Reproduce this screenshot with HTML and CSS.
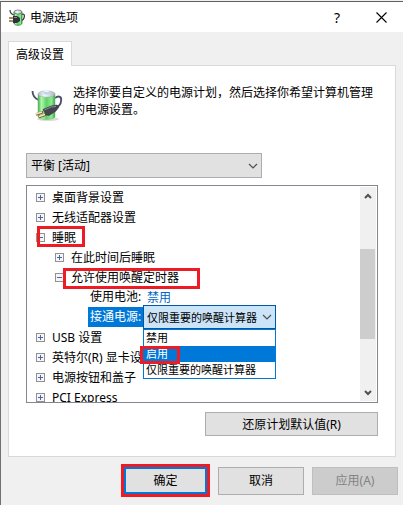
FILE: index.html
```html
<!DOCTYPE html>
<html lang="zh-CN">
<head>
<meta charset="utf-8">
<meta name="viewport" content="width=device-width, initial-scale=1.0">
<title>电源选项</title>
<link rel="stylesheet" href="styles.css">
</head>
<body>

<!-- shared icons -->
<svg width="0" height="0" class="defs" aria-hidden="true">
	<defs>
		<linearGradient id="green" x1="0" x2="1" y1="0" y2="0">
			<stop offset="0" stop-color="#3fae4a"/>
			<stop offset="0.2" stop-color="#b4f5ae"/>
			<stop offset="0.5" stop-color="#5ed365"/>
			<stop offset="0.8" stop-color="#8deb90"/>
			<stop offset="1" stop-color="#3aa548"/>
		</linearGradient>
		<linearGradient id="metal" x1="0" x2="1" y1="0" y2="0">
			<stop offset="0" stop-color="#b5bec4"/>
			<stop offset="0.4" stop-color="#f4f8fa"/>
			<stop offset="1" stop-color="#a9b4b9"/>
		</linearGradient>
	</defs>
	<symbol id="battery" viewBox="0 0 32 33">
		<ellipse cx="17" cy="30" rx="11" ry="2" fill="#dcdcdc"/>
		<path d="M1.500 2c0 4 2 7 6 9" fill="none" stroke="#4a4d6c" stroke-width="1.800"/>
		<path d="M24 9c4-3 7-1 6 3 0 4-3 6-7 7" fill="none" stroke="#4a4d6c" stroke-width="1.800"/>
		<path d="M7 5v22.500c0 4 17 4 17 0V5z" fill="url(#green)" stroke="#6fb877" stroke-width="0.500"/>
		<ellipse cx="15.500" cy="5" rx="8.500" ry="3.200" fill="url(#metal)" stroke="#9ba7ab" stroke-width="0.500"/>
		<path d="M12.500 2v2.500c0 1.200 6 1.200 6 0V2z" fill="#b9d4ea"/>
		<ellipse cx="15.500" cy="2" rx="3" ry="1.300" fill="#e8f4fc"/>
		<path d="M15 25.500l-7 2.500M12 23l-7 2.500" stroke="#7a5c34" stroke-width="2.400"/>
		<path d="M14 25.500l-6 2M11 23l-6 2" stroke="#f8e6bf" stroke-width="1.400"/>
		<path d="M12 20.500l8-3.500 6-1 2 2-3 4-7 4.500-3-0.500z" fill="#43454f" stroke="#2b2d36" stroke-width="0.500"/>
		<path d="M13.500 21l6.500-3 5-0.500" fill="none" stroke="#8b8e9c" stroke-width="1"/>
	</symbol>
	<symbol id="battery-small" viewBox="0 0 16 17">
		<path d="M1 1c0 3 1 4 4 5" fill="none" stroke="#3c4043" stroke-width="1.200"/>
		<path d="M12 6c3-2 4 0 3 3s-3 3-5 3" fill="none" stroke="#3c4043" stroke-width="1.300"/>
		<path d="M5 3v11c0 3 8 3 8 0V3z" fill="url(#green)" stroke="#2c7a38" stroke-width="0.800"/>
		<ellipse cx="9" cy="3" rx="4" ry="2" fill="url(#metal)" stroke="#59645e" stroke-width="0.700"/>
		<path d="M0 9h5M0 12h5" stroke="#8b6a2c" stroke-width="1.400"/>
		<path d="M4 7h4l3 2v3l-3 2H4z" fill="#2f3136"/>
		<path d="M5 8.500h3" stroke="#878a92" stroke-width="1"/>
	</symbol>
	<symbol id="chevron" viewBox="0 0 10 6">
		<path d="M1 1l4 4 4-4" fill="none" stroke="#505050" stroke-width="1.200"/>
	</symbol>
	<symbol id="arrow" viewBox="0 0 8 6">
		<path d="M1 1l3 3 3-3" fill="none" stroke="#505050" stroke-width="2"/>
	</symbol>
</svg>

<div class="window">
	<header class="titlebar">
		<svg class="title_icon"><use href="#battery-small"/></svg>
		<h1>电源选项</h1>
		<button class="title_button" aria-label="帮助">?</button>
		<button class="title_button" aria-label="关闭">
			<svg width="11" height="11" viewBox="0 0 11 11"><path d="M0.500 0.500l10 10M10.500 0.500l-10 10" stroke="#000" stroke-width="1.100"/></svg>
		</button>
	</header>

	<main class="content">
		<button class="tab" role="tab" aria-selected="true">高级设置</button>
		<section class="panel">
			<div class="intro">
				<svg class="intro_icon"><use href="#battery"/></svg>
				<p>选择你要自定义的电源计划，然后选择你希望计算机管理的电源设置。</p>
			</div>

			<div class="combo plan">
				<select aria-label="电源计划"><option>平衡 [活动]</option></select>
				<svg class="chevron"><use href="#chevron"/></svg>
			</div>

			<div class="list">
				<ul class="tree">
					<li><button class="toggle" aria-label="展开"></button><span>桌面背景设置</span></li>
					<li><button class="toggle" aria-label="展开"></button><span>无线适配器设置</span></li>
					<li class="marked mark_sleep"><button class="toggle open" aria-label="折叠"></button><span>睡眠</span></li>
					<li class="level2"><button class="toggle" aria-label="展开"></button><span>在此时间后睡眠</span></li>
					<li class="level2 marked mark_timer"><button class="toggle open" aria-label="折叠"></button><span>允许使用唤醒定时器</span></li>
					<li class="level3"><span class="name">使用电池:</span><a href="#">禁用</a></li>
					<li class="level3">
						<label class="name selected" for="plugged">接通电源:</label>
						<div class="combo timer">
							<select id="plugged"><option>仅限重要的唤醒计算器</option></select>
							<svg class="chevron"><use href="#chevron"/></svg>
							<ul class="dropdown" role="listbox" aria-label="接通电源">
								<li role="option">禁用</li>
								<li role="option" class="active" aria-selected="true">启用</li>
								<li role="option">仅限重要的唤醒计算器</li>
							</ul>
						</div>
					</li>
					<li><button class="toggle" aria-label="展开"></button><span>USB 设置</span></li>
					<li><button class="toggle" aria-label="展开"></button><span>英特尔(R) 显卡设置</span></li>
					<li><button class="toggle" aria-label="展开"></button><span>电源按钮和盖子</span></li>
					<li><button class="toggle" aria-label="展开"></button><span>PCI Express</span></li>
				</ul>
				<div class="scrollbar">
					<button aria-label="向上滚动"><svg class="arrow up"><use href="#arrow"/></svg></button>
					<div class="track"><div class="thumb"></div></div>
					<button aria-label="向下滚动"><svg class="arrow"><use href="#arrow"/></svg></button>
				</div>
			</div>

			<button class="button restore">还原计划默认值(R)</button>
		</section>
	</main>

	<footer class="actions">
		<span class="mark_ok"><button class="button default">确定</button></span>
		<button class="button">取消</button>
		<button class="button" disabled>应用(A)</button>
	</footer>
</div>

</body>
</html>
```

FILE: styles.css
```css
*, *::after {
	box-sizing: border-box;
}
body {
	margin: 0;
	background-color: #f0f0f0;
	color: #000;
	font-size: 12px;
	line-height: 17px;
	font-family: "Noto Sans", "Noto Sans CJK SC", sans-serif;
}
button, select {
	margin: 0;
	padding: 0;
	border: 0;
	border-radius: 0;
	background: none;
	color: inherit;
	font: inherit;
}
ul {
	margin: 0;
	padding: 0;
	list-style: none;
}
.defs {
	position: absolute;
}

.window {
	min-height: 100vh;
	padding-top: 1px;
}
.window > * {
	border-left: 1px solid #707070;
}

/* title bar */
.titlebar {
	display: flex;
	align-items: center;
	height: 31px;
	padding-left: 8px;
	border-top: 1px solid #606060;
	background-color: #fff;
}
.title_icon {
	width: 16px;
	height: 17px;
}
h1 {
	flex: 1;
	margin: 0 0 0 5px;
	font-size: 12px;
	font-weight: normal;
}
.title_button {
	display: flex;
	align-items: center;
	justify-content: center;
	width: 44px;
	height: 30px;
	font-size: 14px;
}

/* tab and its panel */
.content {
	padding: 9px 7px 0;
}
.tab {
	position: relative;
	display: block;
	width: 64px;
	height: 25px;
	margin-bottom: -1px;
	border: 1px solid #d9d9d9;
	border-bottom: 0;
	background-color: #fff;
}
.panel {
	display: flex;
	flex-direction: column;
	padding: 18px 17px 20px;
	border: 1px solid #d9d9d9;
	background-color: #fff;
}
.intro {
	display: flex;
	gap: 10px;
	min-height: 69px;
	padding-left: 5px;
}
.intro_icon {
	flex: none;
	width: 32px;
	height: 33px;
	margin-top: 5px;
}
.intro p {
	margin: 0;
}

/* drop-downs */
.combo {
	position: relative;
}
.combo select {
	display: block;
	width: 100%;
	height: 100%;
	appearance: none;
}
.chevron {
	position: absolute;
	top: 50%;
	right: 4px;
	width: 10px;
	height: 6px;
	margin-top: -3px;
	pointer-events: none;
}
.plan {
	width: 67%;
	height: 25px;
	margin-bottom: 7px;
}
.plan select {
	padding-left: 4px;
	border: 1px solid #adadad;
	background-color: #e1e1e1;
}
.timer {
	width: 133px;
	height: 24px;
	font-size: 11px;
}
.timer select {
	padding-left: 3px;
	border: 1px solid #0058a4;
	background-color: #cce4f7;
}
.dropdown {
	position: absolute;
	top: 100%;
	left: 0;
	width: 100%;
	border: 1px solid #0078d7;
	background-color: #fff;
	line-height: 16px;
}
.dropdown li {
	position: relative;
	height: 16px;
	padding-left: 2px;
}
.dropdown .active {
	background-color: #0078d7;
	color: #fff;
}

/* settings tree */
.list {
	display: flex;
	height: 218px;
	padding: 1px;
	margin-bottom: 9px;
	border: 1px solid #828790;
	overflow: hidden;
}
.tree {
	flex: 1;
	padding-left: 8px;
}
.tree > li {
	position: relative;
	display: flex;
	align-items: center;
	gap: 7px;
	height: 20px;
	white-space: nowrap;
}
.tree > .level2 {
	padding-left: 19px;
}
.tree > .level3 {
	gap: 0;
	padding-left: 52px;
	z-index: 1;
}
.toggle {
	width: 9px;
	height: 9px;
	border: 1px solid #919191;
	background: linear-gradient(#4b63a7, #4b63a7) center / 5px 1px no-repeat,
		linear-gradient(#4b63a7, #4b63a7) center / 1px 5px no-repeat, #f5f5f5;
}
.toggle.open {
	background: linear-gradient(#4b63a7, #4b63a7) center / 5px 1px no-repeat, #f5f5f5;
}
.name {
	width: 55px;
	padding-left: 2px;
	line-height: 20px;
}
.selected {
	background-color: #0078d7;
	color: #fff;
}
.tree a {
	padding-left: 4px;
	color: #0066cc;
	text-decoration: none;
}

/* red highlight frames */
.marked::after, .active::after {
	content: "";
	position: absolute;
	border: 3px solid #ed1c24;
}
.mark_sleep::after {
	top: -1px;
	left: 1px;
	width: 48px;
	height: 21px;
}
.mark_timer::after {
	top: 1px;
	left: 27px;
	width: 137px;
	height: 21px;
}
.active::after {
	top: 0;
	left: -4px;
	width: 40px;
	height: 18px;
}

/* scroll bar */
.scrollbar {
	display: flex;
	flex-direction: column;
	width: 16px;
	background-color: #f0f0f0;
}
.scrollbar button {
	display: flex;
	align-items: center;
	justify-content: center;
	height: 17px;
}
.arrow {
	width: 8px;
	height: 6px;
}
.up {
	transform: rotate(180deg);
}
.track {
	flex: 1;
	padding-top: 45px;
}
.thumb {
	height: 90px;
	margin-right: 1px;
	background-color: #cdcdcd;
}

/* buttons */
.button {
	width: 86px;
	height: 28px;
	border: 1px solid #adadad;
	background-color: #e1e1e1;
}
.button:disabled {
	border-color: #bfbfbf;
	background-color: #cccccc;
	color: #838383;
}
.restore {
	align-self: flex-end;
	width: 173px;
	height: 24px;
}
.actions {
	display: flex;
	align-items: center;
	justify-content: flex-end;
	gap: 8px;
	padding: 7px 5px 8px;
}
.mark_ok {
	display: flex;
	border: 3px solid #ed1c24;
}
.default {
	width: 83px;
	height: 27px;
	border: 2px solid #0078d7;
}
```
